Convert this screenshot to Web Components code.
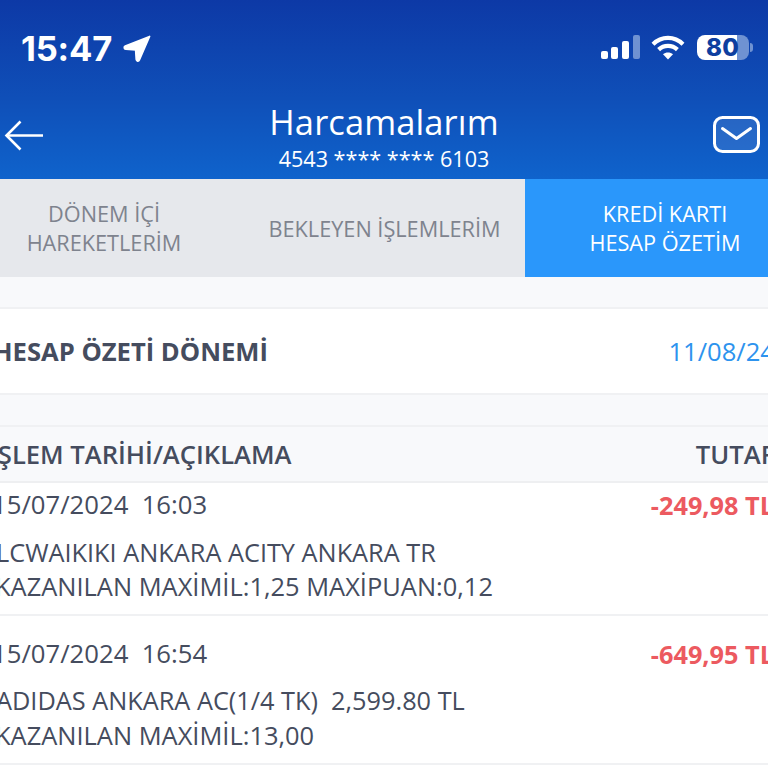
<!DOCTYPE html>
<html lang="tr"><head><meta charset="utf-8"><title>Harcamalarım</title>
<style>
html,body{margin:0;padding:0;background:#f8f9fb}
body{width:768px;height:768px;overflow:hidden;font-family:"Open Sans",sans-serif}
</style></head><body>
<bank-screen>
  <app-header title="Harcamalarım" sub="4543 **** **** 6103"></app-header>
  <tab-bar></tab-bar>
  <info-row label="HESAP ÖZETİ DÖNEMİ" value="11/08/24"></info-row>
  <table-head left="İŞLEM TARİHİ/AÇIKLAMA" right="TUTAR"></table-head>
  <tx-row date="15/07/2024  16:03" amount="-249,98 TL" l1="LCWAIKIKI ANKARA ACITY ANKARA TR" l2="KAZANILAN MAXİMİL:1,25 MAXİPUAN:0,12"></tx-row>
  <tx-row date="15/07/2024  16:54" amount="-649,95 TL" l1="ADIDAS ANKARA AC(1/4 TK)  2,599.80 TL" l2="KAZANILAN MAXİMİL:13,00"></tx-row>
  <tx-end></tx-end>
</bank-screen>
<script>
function def(name,html){
  customElements.define(name,class extends HTMLElement{
    connectedCallback(){
      if(this.shadowRoot)return;
      const a=n=>(this.getAttribute(n)||'').replace(/&/g,'&amp;');
      this.attachShadow({mode:'open'}).innerHTML=html(a);
    }
  });
}
def('bank-screen',()=>`<style>:host{display:block;width:768px;height:768px;overflow:hidden;background:#f8f9fb;color:#454c5e}</style><slot></slot>`);
def('tx-end',()=>`<style>:host{display:block;height:8px;background:#fff}</style>`);
def('status-bar',()=>`<style>
:host{display:flex;justify-content:space-between;height:96px;color:#fff}
.l{display:flex;align-items:flex-start;gap:11px;padding:27px 0 0 21px}
.t{font:700 34.6px/42px Inter,"Liberation Sans",sans-serif;letter-spacing:-.2px}
.a{margin-top:8px}
.r{display:flex;align-items:flex-start;padding:35px 19px 0 0;gap:12px}
.sig{margin-right:-1px}
.b{position:relative;width:52px;height:25px;border-radius:8px;background:linear-gradient(90deg,#fff 0,#fff 40px,#6f92d2 40px);display:flex;align-items:center;justify-content:center}
.b span{font:800 24px/25px Inter,"Liberation Sans",sans-serif;color:#0e3f9f;letter-spacing:.2px;margin-left:-1px}
.tip{position:absolute;left:53px;top:8px;width:3px;height:9px;border-radius:0 3px 3px 0;background:#6f92d2}
</style>
<div class="l"><span class="t">15:47</span>
<svg class="a" width="28" height="28" viewBox="0 0 28 28"><path d="M26.6 1.4 16.4 25c-.8 1.8-3 1.4-3.2-.5l-.6-9.6-9.8-.7c-1.9-.2-2.2-2.5-.5-3.3z" fill="#fff" stroke="#fff" stroke-width="1.6" stroke-linejoin="round"/></svg></div>
<div class="r">
<svg class="sig" width="39" height="25" viewBox="0 0 39 25"><rect x="0" y="16" width="7" height="8" rx="2" fill="#fff"/><rect x="10" y="12" width="7" height="12" rx="2" fill="#fff"/><rect x="21" y="6" width="7" height="18" rx="2" fill="#fff"/><rect x="32" y="0" width="7" height="24" rx="2" fill="#6f92d2"/></svg>
<svg width="34" height="25" viewBox="0 0 34 25" fill="none" stroke="#fff" stroke-width="4.2"><path d="M2 9.2C10.5 .8 23.5 .8 32 9.2"/><path d="M7.6 14.6c5.3-5 13.5-5 18.8 0"/><path d="M17 24.5l-5-5.2c2.8-2.4 7.2-2.4 10 0z" fill="#fff" stroke="none"/></svg>
<div class="b"><span>80</span><i class="tip"></i></div>
</div>`);
def('app-header',a=>`<style>
:host{display:block;height:179px;background:linear-gradient(180deg,#0d39a6 0,#0f4fb8 55%,#0f63cc 100%);color:#fff}
.n{display:grid;grid-template-columns:120px 1fr 120px;height:83px;align-items:start}
.c{text-align:center;padding-top:5px}
.h{font-size:34.5px;line-height:42px;font-weight:500;letter-spacing:.1px}
.s{font-size:21.6px;line-height:30px;margin-top:1px;white-space:pre}
.b{padding:24px 0 0 4px}.m{justify-self:end;padding:20px 8px 0 0}
svg{display:block}
</style>
<status-bar></status-bar>
<div class="n">
<div class="b"><svg width="40" height="32" viewBox="0 0 40 32" fill="none" stroke="#fff" stroke-width="2.6"><path d="M39 15.5H3"/><path d="M16.5 1.5 2.5 15.5 16.5 29.5"/></svg></div>
<div class="c"><div class="h">${a('title')}</div><div class="s">${a('sub')}</div></div>
<div class="m"><svg width="47" height="37" viewBox="0 0 47 37" fill="rgba(255,255,255,.1)" stroke="#fff"><rect x="1.5" y="1.5" width="44" height="34" rx="8" stroke-width="3"/><path d="M9.5 12.5 23.5 22.5 37.5 12.5" fill="none" stroke-width="3" stroke-linecap="round" stroke-linejoin="round"/></svg></div>
</div>`);
def('tab-item',a=>`<style>
:host{display:flex;align-items:center;justify-content:center;text-align:center;font-size:21.7px;line-height:29px;color:#7e838e;box-sizing:border-box}
:host([active]){background:#2a97fb;color:#fff}
</style><div><slot></slot></div>`);
def('tab-bar',()=>`<style>
:host{display:block;height:98px;overflow:hidden;background:#e6e8ec}
.g{display:grid;grid-template-columns:280px 281px 280px;height:98px;margin-left:-36px;width:841px}
</style>
<div class="g"><tab-item>DÖNEM İÇİ<br>HAREKETLERİM</tab-item>
<tab-item>BEKLEYEN İŞLEMLERİM</tab-item>
<tab-item active>KREDİ KARTI<br>HESAP ÖZETİM</tab-item></div>`);
def('info-row',a=>`<style>
:host{display:flex;justify-content:space-between;align-items:center;box-sizing:border-box;height:88px;margin:30px 0;background:#fff;border-top:2px solid #f0f1f3;border-bottom:2px solid #f0f1f3;white-space:nowrap;overflow:hidden}
.l{font-size:25.6px;font-weight:700;margin-left:-7px;color:#454c5e}
.v{font-size:25.6px;color:#2d93ee;margin-right:-7px;font-weight:400}
</style><span class="l">${a('label')}</span><span class="v">${a('value')}</span>`);
def('table-head',a=>`<style>
:host{display:flex;justify-content:space-between;align-items:center;box-sizing:border-box;height:58px;background:#f8f9fb;border-top:2px solid #f0f1f3;border-bottom:2px solid #eeeff1;font-size:25.6px;font-weight:600;white-space:nowrap;overflow:hidden}
.l{margin-left:-10px}.r{margin-right:-9px}
</style><span class="l">${a('left')}</span><span class="r">${a('right')}</span>`);
def('tx-row',a=>`<style>
:host{display:block;box-sizing:border-box;background:#fff;border-bottom:2px solid #f0f1f3;padding:21px 0 11px;white-space:pre;overflow:hidden;font-size:25.3px;line-height:34.5px;color:#454c5e}
:host(:first-of-type){padding:5px 0 10px}
.t{display:flex;justify-content:space-between;margin-bottom:12px;font-size:25.7px}
.d{margin-left:-8px}
.m{font-weight:700;color:#ec5a60;margin-right:-6px;font-size:25.3px}
.x{margin-left:-4px;display:block}
.y{margin-left:-5px;display:block;font-size:25.45px}
</style><div class="t"><span class="d">${a('date')}</span><span class="m">${a('amount')}</span></div><span class="x">${a('l1')}</span><span class="y">${a('l2')}</span>`);
</script>
</body></html>
